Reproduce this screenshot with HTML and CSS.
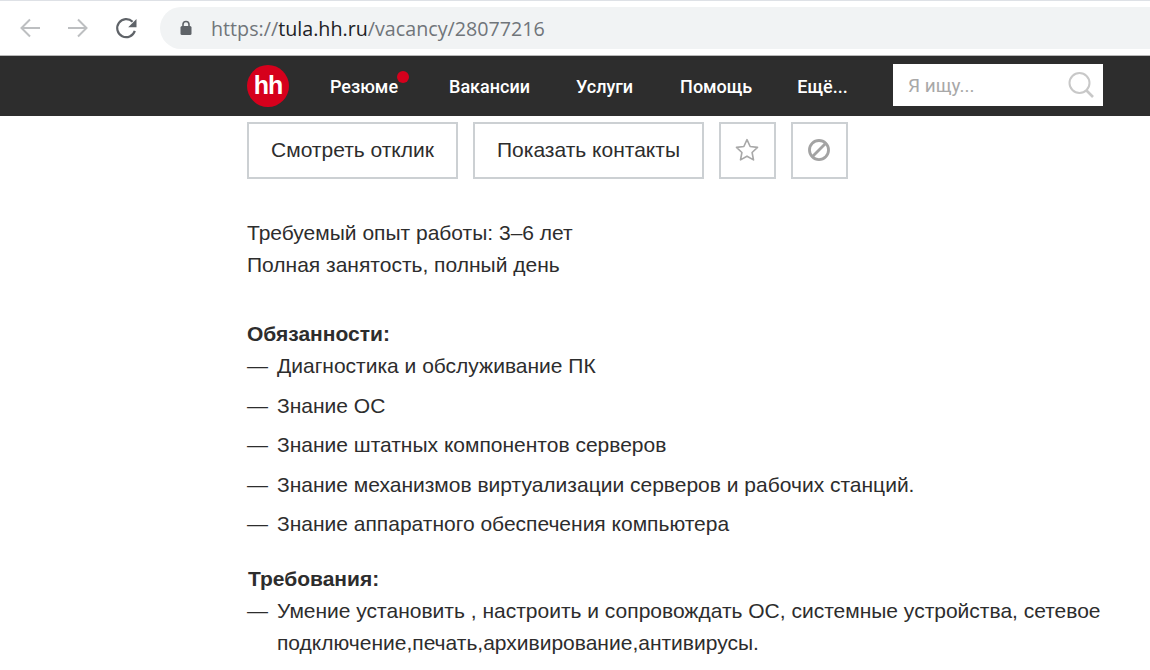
FILE: index.html
```html
<!DOCTYPE html>
<html lang="ru">
<head>
  <meta charset="UTF-8">
  <title>Вакансия</title>
  <link rel="stylesheet" href="styles.css">
</head>
<body>
  <!-- Browser toolbar -->
  <div class="toolbar">
    <svg class="tool-icon" width="24" height="24" viewBox="0 0 24 24"><path d="M22 12H4M12 3.500 3.500 12l8.500 8.500" fill="none" stroke="#bdbfc1" stroke-width="2"/></svg>
    <svg class="tool-icon" width="24" height="24" viewBox="0 0 24 24"><path d="M2 12h18M12 3.500l8.500 8.500-8.500 8.500" fill="none" stroke="#bdbfc1" stroke-width="2"/></svg>
    <svg class="tool-icon reload" width="24" height="24" viewBox="0 0 24 24"><path d="M20.800 14.800A9 9 0 1 1 18.600 5.800" fill="none" stroke="#5f6368" stroke-width="2.200"/><path d="M22.500 3v8.300h-8.300z" fill="#5f6368"/></svg>
    <div class="omnibox">
      <svg class="lock" width="12" height="16" viewBox="0 0 12 16"><path d="M3 7V4.500a3 3 0 0 1 6 0V7" fill="none" stroke="#5f6368" stroke-width="1.600"/><rect x="0.500" y="6" width="11" height="9" rx="1.500" fill="#5f6368"/></svg>
      <span class="url">https://<span class="url-host">tula.hh.ru</span>/vacancy/28077216</span>
    </div>
  </div>

  <!-- Site header -->
  <header class="site-header">
    <div class="logo">hh</div>
    <nav class="nav">
      <a class="nav-item nav-resume">Резюме<span class="dot"></span></a>
      <a class="nav-item nav-vacancies">Вакансии</a>
      <a class="nav-item nav-services">Услуги</a>
      <a class="nav-item nav-help">Помощь</a>
      <a class="nav-item">Ещё...</a>
    </nav>
    <div class="search">
      <span>Я ищу...</span>
      <svg width="28" height="28" viewBox="0 0 28 28"><circle cx="12.500" cy="12" r="10" fill="none" stroke="#c8c8c8" stroke-width="2"/><path d="M19.500 19.500 26 26" stroke="#c8c8c8" stroke-width="2.600"/></svg>
    </div>
  </header>

  <main class="content">
    <div class="actions">
      <button class="btn btn-response">Смотреть отклик</button>
      <button class="btn btn-contacts">Показать контакты</button>
      <button class="btn btn-icon">
        <svg class="btn-glyph" width="26" height="26" viewBox="0 0 24 24"><path d="M12 2.500l2.900 6.300 6.800.8-5 4.700 1.300 6.800L12 17.700l-6 3.400 1.300-6.800-5-4.700 6.800-.8z" fill="none" stroke="#a8a8a8" stroke-width="1.500" stroke-linejoin="round"/></svg>
      </button>
      <button class="btn btn-icon">
        <svg class="btn-glyph" width="26" height="26" viewBox="0 0 24 24"><circle cx="12" cy="12" r="8.800" fill="none" stroke="#a3a3a3" stroke-width="2.600"/><path d="M6 18 18 6" stroke="#a3a3a3" stroke-width="2.600"/></svg>
      </button>
    </div>

    <p class="summary">Требуемый опыт работы: 3–6 лет<br>Полная занятость, полный день</p>

    <h3 class="section-title">Обязанности:</h3>
    <ul class="list">
      <li>Диагностика и обслуживание ПК</li>
      <li>Знание ОС</li>
      <li>Знание штатных компонентов серверов</li>
      <li>Знание механизмов виртуализации серверов и рабочих станций.</li>
      <li>Знание аппаратного обеспечения компьютера</li>
    </ul>

    <h3 class="section-title section-second">Требования:</h3>
    <ul class="list">
      <li>Умение установить , настроить и сопровождать ОС, системные устройства, сетевое подключение,печать,архивирование,антивирусы.</li>
    </ul>
  </main>
</body>
</html>
```

FILE: styles.css
```css
/* Base styles */
html, body {
  height: 100%;
}

body {
  margin: 0;
  font-family: "Liberation Sans", Arial, sans-serif;
  color: #2d2d2d;
  background-color: #fff;
  overflow: hidden;
}

/* Browser toolbar */
.toolbar {
  display: flex;
  align-items: center;
  height: 56px;
  box-sizing: border-box;
  padding-left: 18px;
  border-top: 1px solid #dee1e6;
  border-bottom: 1px solid #b8b8b8;
  background-color: #fff;
}

.tool-icon {
  flex: none;
  margin-right: 24px;
}

.reload {
  margin-right: 22px;
}

.omnibox {
  display: flex;
  align-items: center;
  flex: 1;
  height: 42px;
  padding-left: 20px;
  border-radius: 21px 0 0 21px;
  background-color: #f1f3f4;
}

.lock {
  margin-right: 19px;
}

.url {
  font-family: "Open Sans", sans-serif;
  font-size: 19.700px;
  color: #70757a;
}

.url-host {
  color: #202124;
}

/* Site header */
.site-header {
  display: flex;
  align-items: center;
  height: 60px;
  padding-left: 247px;
  background-color: #2d2d2d;
}

.logo {
  width: 42px;
  height: 42px;
  border-radius: 50%;
  background-color: #d6001c;
  color: #fff;
  font-size: 25px;
  font-weight: bold;
  line-height: 40px;
  letter-spacing: -1px;
  text-align: center;
}

.nav {
  display: flex;
  width: 563px;
  margin-left: 41px;
}

.nav-item {
  position: relative;
  color: #fff;
  font-family: "Roboto", sans-serif;
  font-size: 18px;
  font-weight: 500;
}

.nav-resume {
  margin-right: 51px;
}

.nav-vacancies {
  margin-right: 46px;
}

.nav-services {
  margin-right: 47px;
}

.nav-help {
  margin-right: 45px;
}

.dot {
  position: absolute;
  top: -5px;
  right: -11px;
  width: 12px;
  height: 12px;
  border-radius: 50%;
  background-color: #d6001c;
}

.search {
  display: flex;
  align-items: center;
  justify-content: space-between;
  box-sizing: border-box;
  width: 210px;
  height: 42px;
  margin-bottom: 2px;
  padding: 0 8px 0 15px;
  background-color: #fff;
  color: #a8a8a8;
  font-family: "Roboto", sans-serif;
  font-size: 19px;
}

/* Content */
.content {
  padding: 6px 40px 0 247px;
}

.actions {
  display: flex;
  gap: 15px;
}

.btn {
  display: flex;
  align-items: center;
  justify-content: center;
  box-sizing: border-box;
  height: 57px;
  padding: 0 0 2px;
  border: 2px solid #ccd0d3;
  background-color: #fff;
  color: #2d2d2d;
  font-family: inherit;
  font-size: 21px;
}

.btn-response {
  width: 211px;
}

.btn-contacts {
  width: 231px;
}

.btn-icon {
  width: 57px;
  padding-right: 2px;
}

.summary {
  margin: 38px 0 0;
  font-size: 21px;
  line-height: 32px;
}

.section-title {
  margin: 36px 0 0;
  font-size: 21px;
  line-height: 33px;
  font-weight: bold;
}

.section-second {
  margin: 22px 0 0 1px;
}

.list {
  margin: 0;
  padding: 0;
  list-style: none;
  font-size: 21px;
  line-height: 32px;
}

.list li {
  position: relative;
  padding-left: 30px;
  margin-bottom: 7.500px;
}

.list li::before {
  content: "—";
  position: absolute;
  left: 0;
}
```
